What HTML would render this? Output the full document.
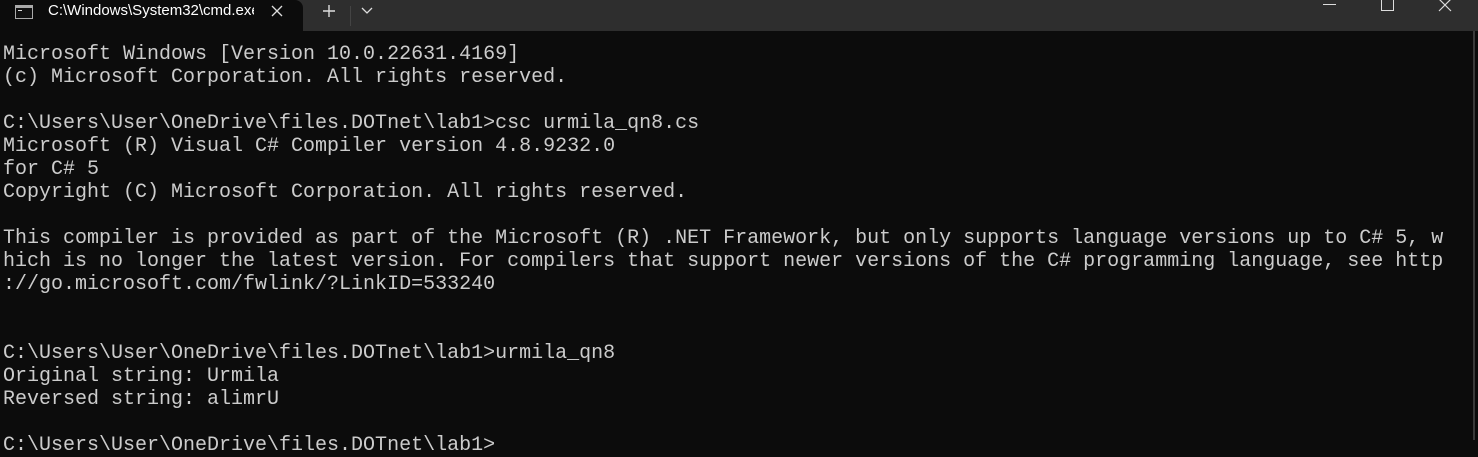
<!DOCTYPE html>
<html><head><style>
html,body{margin:0;padding:0;width:1478px;height:440px;overflow:hidden;background:#0c0c0c}
.tb{position:absolute;left:0;top:0;width:1478px;height:31px;background:#2e2e2e}
.tab{position:absolute;left:0;top:0;width:303px;height:31px;background:#0c0c0c;border-radius:0 8px 0 0}
.tab .t{position:absolute;left:48px;top:2px;font:15px "Liberation Sans",sans-serif;color:#fff;white-space:nowrap;width:206px;overflow:hidden}
pre{position:absolute;left:3px;top:43px;margin:0;font:20px/23px "Liberation Mono",monospace;color:#cccccc}
.sb{position:absolute;left:1473px;top:31px;width:2px;height:409px;background:#3a3a3a}
</style></head><body>
<div class="tb">
<div class="tab">
<svg style="position:absolute;left:15px;top:5px" width="18" height="14"><rect x="0.5" y="0.5" width="17" height="13" fill="#111" stroke="#aaa"/><rect x="1" y="1" width="16" height="2" fill="#aaa"/><rect x="3" y="5" width="4" height="1" fill="#ddd"/></svg>
<div class="t">C:\Windows\System32\cmd.exe</div>
<svg style="position:absolute;left:270px;top:4px" width="14" height="14"><path d="M2 2L12 12M12 2L2 12" stroke="#ddd" stroke-width="1.3"/></svg>
</div>
<svg style="position:absolute;left:322px;top:4px" width="14" height="14"><path d="M7 1V13M1 7H13" stroke="#ddd" stroke-width="1.4"/></svg>
<svg style="position:absolute;left:361px;top:7px" width="12" height="8"><path d="M1 1L6 6L11 1" stroke="#ddd" stroke-width="1.3" fill="none"/></svg>
<div style="position:absolute;left:350px;top:6px;width:1px;height:20px;background:#444"></div>
<div style="position:absolute;left:1323px;top:4px;width:13px;height:1px;background:#ddd"></div>
<div style="position:absolute;left:1381px;top:0px;width:11px;height:10px;border:1px solid #ddd;border-top:none"></div>
<svg style="position:absolute;left:1438px;top:0px" width="14" height="12"><path d="M1 -1L13 11M13 -1L1 11" stroke="#ddd" stroke-width="1.2"/></svg>
</div>
<div class="sb"></div>
<pre>Microsoft Windows [Version 10.0.22631.4169]
(c) Microsoft Corporation. All rights reserved.

C:\Users\User\OneDrive\files.DOTnet\lab1>csc urmila_qn8.cs
Microsoft (R) Visual C# Compiler version 4.8.9232.0
for C# 5
Copyright (C) Microsoft Corporation. All rights reserved.

This compiler is provided as part of the Microsoft (R) .NET Framework, but only supports language versions up to C# 5, w
hich is no longer the latest version. For compilers that support newer versions of the C# programming language, see http
://go.microsoft.com/fwlink/?LinkID=533240


C:\Users\User\OneDrive\files.DOTnet\lab1>urmila_qn8
Original string: Urmila
Reversed string: alimrU

C:\Users\User\OneDrive\files.DOTnet\lab1></pre>
</body></html>
